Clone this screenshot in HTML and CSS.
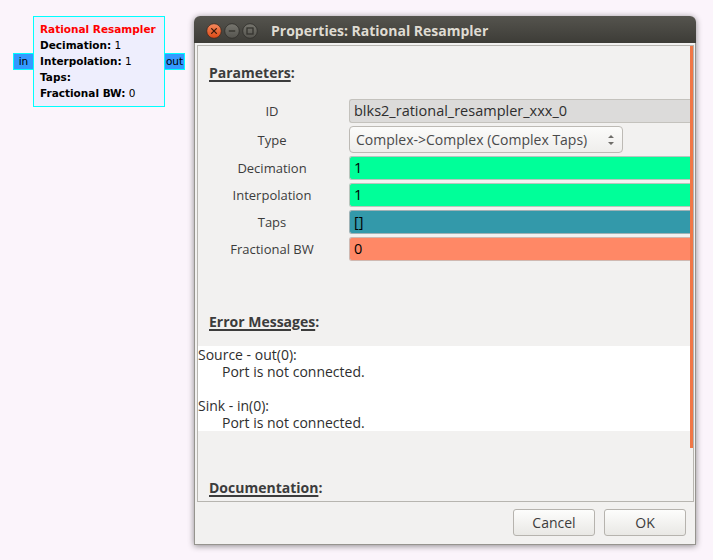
FILE: index.html
```html
<!DOCTYPE html>
<html>
<head>
<meta charset="utf-8">
<link rel="stylesheet" href="styles.css">
</head>
<body>
<div class="desktop">
  <div class="block">
    <div class="port port-in">in</div>
    <div class="block-body">
      <div class="block-title">Rational Resampler</div>
      <div class="block-param"><b>Decimation:</b> 1</div>
      <div class="block-param"><b>Interpolation:</b> 1</div>
      <div class="block-param"><b>Taps:</b></div>
      <div class="block-param"><b>Fractional BW:</b> 0</div>
    </div>
    <div class="port port-out">out</div>
  </div>

  <div class="window">
    <div class="titlebar">
      <div class="wbtns">
        <svg class="wb" width="16" height="16" viewBox="0 0 16 16">
          <defs>
            <linearGradient id="gc" x1="0" y1="0" x2="0" y2="1">
              <stop offset="0" stop-color="#f58a5e"/>
              <stop offset="1" stop-color="#dd4814"/>
            </linearGradient>
            <linearGradient id="gg" x1="0" y1="0" x2="0" y2="1">
              <stop offset="0" stop-color="#77766f"/>
              <stop offset="1" stop-color="#55544e"/>
            </linearGradient>
          </defs>
          <circle cx="8" cy="8" r="7.3" fill="url(#gc)" stroke="#3a2a22" stroke-width="0.8"/>
          <path d="M5.6 5.6 L10.4 10.4 M10.4 5.6 L5.6 10.4" stroke="#3b1a0c" stroke-width="1.3" stroke-linecap="round"/>
        </svg>
        <svg class="wb" width="16" height="16" viewBox="0 0 16 16">
          <circle cx="8" cy="8" r="7.3" fill="url(#gg)" stroke="#2e2d2a" stroke-width="0.8"/>
          <path d="M4.8 8 L11.2 8" stroke="#35342f" stroke-width="1.4"/>
        </svg>
        <svg class="wb" width="16" height="16" viewBox="0 0 16 16">
          <circle cx="8" cy="8" r="7.3" fill="url(#gg)" stroke="#2e2d2a" stroke-width="0.8"/>
          <rect x="5" y="5" width="6" height="6" fill="none" stroke="#35342f" stroke-width="1.3"/>
        </svg>
      </div>
      <div class="wtitle">Properties: Rational Resampler</div>
    </div>
    <div class="wbody">
      <div class="frame">
        <div class="scrollbar"></div>
        <div class="section-head head-params"><u>Parameters</u>:</div>
        <div class="params">
          <div class="plabel">ID</div>
          <div class="entry entry-id">blks2_rational_resampler_xxx_0</div>
          <div class="plabel">Type</div>
          <div class="combo">
            <span>Complex-&gt;Complex (Complex Taps)</span>
            <svg width="8" height="14" viewBox="0 0 8 14">
              <path d="M1 5 L4 2 L7 5 Z M1 9 L4 12 L7 9 Z" fill="#6e6d69"/>
            </svg>
          </div>
          <div class="plabel">Decimation</div>
          <div class="entry entry-green">1</div>
          <div class="plabel">Interpolation</div>
          <div class="entry entry-green">1</div>
          <div class="plabel">Taps</div>
          <div class="entry entry-teal">[]</div>
          <div class="plabel">Fractional BW</div>
          <div class="entry entry-salmon">0</div>
        </div>
        <div class="section-head head-errors"><u>Error Messages</u>:</div>
        <div class="errors">
          <div>Source - out(0):</div>
          <div class="indent">Port is not connected.</div>
          <div class="blank">&nbsp;</div>
          <div>Sink - in(0):</div>
          <div class="indent">Port is not connected.</div>
        </div>
        <div class="section-head head-docs"><u>Documentation</u>:</div>
      </div>
      <div class="actions">
        <button class="btn">Cancel</button>
        <button class="btn">OK</button>
      </div>
    </div>
  </div>
</div>
</body>
</html>
```

FILE: styles.css
```css
html, body {
  margin: 0;
  padding: 0;
}
body {
  background: #fbf4fb;
  width: 713px;
  height: 560px;
  overflow: hidden;
}
.desktop {
  position: relative;
  width: 713px;
  height: 560px;
}

/* flow graph block */
.block {
  position: absolute;
  left: 13px;
  top: 16px;
  display: flex;
  align-items: center;
  font-family: "DejaVu Sans", sans-serif;
  font-size: 10.5px;
  color: #000;
}
.block-body {
  width: 124px;
  height: 80px;
  padding: 4px 0 5px 6px;
  border: 1px solid #00ffff;
  background: #eeeefd;
  line-height: 16px;
  white-space: nowrap;
}
.block-title {
  color: #ff0000;
  font-weight: bold;
}
.block-param b {
  font-weight: bold;
}
.port {
  height: 15px;
  line-height: 15px;
  background: #3399ff;
  border: 1px solid #00ffff;
  font-size: 10.5px;
  text-align: center;
}
.port-in {
  width: 19px;
  border-right: none;
}
.port-out {
  width: 19px;
  border-left: none;
}

/* dialog window */
.window {
  position: absolute;
  left: 194px;
  top: 16px;
  width: 502px;
  height: 529px;
  border-radius: 6px 6px 0 0;
  box-shadow: 0 1px 6px rgba(0, 0, 0, 0.45);
  display: flex;
  flex-direction: column;
  font-family: "Open Sans", "DejaVu Sans", sans-serif;
  color: #3c3c3c;
}
.titlebar {
  height: 27px;
  flex: none;
  border-radius: 6px 6px 0 0;
  background: linear-gradient(#55544e, #3d3c37);
  display: flex;
  align-items: center;
}
.wbtns {
  display: flex;
  gap: 2px;
  margin-left: 12px;
  margin-top: 2px;
}
.wb {
  display: block;
}
.wtitle {
  margin-left: 13px;
  margin-top: 1px;
  font-size: 14px;
  font-weight: bold;
  color: #dfdbd2;
}
.wbody {
  flex: 1;
  background: #f2f1f0;
  border: 1px solid #96948f;
  border-top: none;
  padding: 2px 1px 0 2px;
  display: flex;
  flex-direction: column;
}
.frame {
  position: relative;
  height: 455px;
  border: 1px solid #b7b5b0;
  overflow: hidden;
  flex: none;
}
.scrollbar {
  position: absolute;
  right: 0;
  top: 0;
  width: 3px;
  height: 402px;
  background: #f07746;
}
.section-head {
  font-size: 14px;
  font-weight: bold;
  line-height: 18px;
  height: 18px;
  margin-left: 11px;
  color: #3c3c3c;
}
.section-head u {
  text-decoration: underline;
  text-decoration-thickness: 2px;
  text-underline-offset: 2px;
}
.head-params {
  margin-top: 18px;
}
.params {
  margin-top: 17px;
  display: grid;
  grid-template-columns: 132px 1fr;
  grid-template-rows: 24px 27px 24px 24px 24px 24px;
  row-gap: 3px;
  column-gap: 11px;
  padding-left: 8px;
  padding-right: 3px;
}
.plabel {
  font-size: 13px;
  text-align: center;
  align-self: center;
  color: #3c3c3c;
}
.entry {
  box-sizing: border-box;
  font-size: 14.5px;
  line-height: 22px;
  padding-left: 4px;
  border: 1px solid #c4c2bd;
  border-right: none;
  border-radius: 3px 0 0 3px;
  color: #000;
  white-space: nowrap;
}
.entry-id {
  background: #dcdbda;
  color: #2e2e2e;
}
.entry-green {
  background: #00ff99;
  border-color: #b9c5bd;
}
.entry-teal {
  background: #3399aa;
  border-color: #9fb2b6;
}
.entry-salmon {
  background: #ff8866;
  border-color: #cfb9b2;
}
.combo {
  box-sizing: border-box;
  width: 274px;
  border: 1px solid #bdbab5;
  border-radius: 4px;
  background: linear-gradient(#fbfbfa, #efeeec);
  display: flex;
  align-items: center;
  justify-content: space-between;
  padding: 0 7px 0 6px;
  font-size: 14px;
  color: #4a4a4a;
}
.combo svg {
  display: block;
}
.head-errors {
  margin-top: 52px;
}
.errors {
  margin-top: 15px;
  margin-right: 3px;
  background: #ffffff;
  font-size: 14px;
  line-height: 17px;
  color: #2e2e2e;
}
.errors .indent {
  padding-left: 24px;
}
.head-docs {
  margin-top: 48px;
}
.actions {
  display: flex;
  justify-content: flex-end;
  gap: 9px;
  padding: 7px 8px 0 0;
}
.btn {
  box-sizing: border-box;
  width: 82px;
  height: 27px;
  border: 1px solid #b6b3ae;
  border-radius: 3px;
  background: linear-gradient(#fdfdfc, #e9e8e5);
  font-family: "Open Sans", "DejaVu Sans", sans-serif;
  font-size: 14px;
  color: #3c3c3c;
  padding: 0;
  margin: 0;
}
```
